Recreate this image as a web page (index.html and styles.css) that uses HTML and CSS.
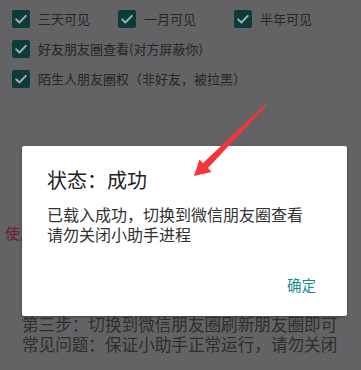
FILE: index.html
```html
<!DOCTYPE html>
<html lang="zh-CN">
<head>
<meta charset="utf-8">
<title>状态</title>
<link rel="stylesheet" href="styles.css">
</head>
<body>
<main class="page">
  <section class="options">
    <div class="row row-3">
      <label class="opt"><span class="box"><svg viewBox="0 0 18 18"><path d="M4.2 9.4l3.2 3.1 6.4-6.6" /></svg></span><span class="lbl">三天可见</span></label>
      <label class="opt"><span class="box"><svg viewBox="0 0 18 18"><path d="M4.2 9.4l3.2 3.1 6.4-6.6" /></svg></span><span class="lbl">一月可见</span></label>
      <label class="opt"><span class="box"><svg viewBox="0 0 18 18"><path d="M4.2 9.4l3.2 3.1 6.4-6.6" /></svg></span><span class="lbl">半年可见</span></label>
    </div>
    <div class="row">
      <label class="opt"><span class="box"><svg viewBox="0 0 18 18"><path d="M4.2 9.4l3.2 3.1 6.4-6.6" /></svg></span><span class="lbl">好友朋友圈查看(对方屏蔽你)</span></label>
    </div>
    <div class="row">
      <label class="opt"><span class="box"><svg viewBox="0 0 18 18"><path d="M4.2 9.4l3.2 3.1 6.4-6.6" /></svg></span><span class="lbl">陌生人朋友圈权（非好友，被拉黑）</span></label>
    </div>
  </section>

  <p class="notice">使用</p>

  <section class="steps">
    <p>第三步：切换到微信朋友圈刷新朋友圈即可</p>
    <p>常见问题：保证小助手正常运行，请勿关闭</p>
  </section>
</main>

<div class="dialog" role="dialog">
  <h2 class="dlg-title">状态：成功</h2>
  <p class="dlg-body">已载入成功，切换到微信朋友圈查看<br>请勿关闭小助手进程</p>
  <div class="dlg-actions"><button class="dlg-btn">确定</button></div>
</div>

<svg class="arrow" viewBox="0 0 82 82" width="82" height="82">
  <polygon points="6,76 11.5,59.5 15,63 77.3,4.2 78.5,5.5 20,68 23.5,72" />
</svg>
</body>
</html>
```

FILE: styles.css
```css
* { box-sizing: border-box; }

html, body {
  margin: 0;
  padding: 0;
}

body {
  width: 361px;
  height: 370px;
  overflow: hidden;
  background: #636264;
  font-family: "Noto Sans CJK SC", "Noto Sans", sans-serif;
  position: relative;
}

.page {
  display: flex;
  flex-direction: column;
}

.options {
  padding: 4px 12px 0;
  display: flex;
  flex-direction: column;
}

.row {
  height: 30px;
  display: flex;
  align-items: center;
}

.row-3 {
  display: grid;
  grid-template-columns: 106px 116px 1fr;
  align-items: center;
}

.opt {
  display: flex;
  align-items: center;
  gap: 8px;
}

.box {
  width: 18px;
  height: 18px;
  border-radius: 2px;
  background: #0c3b3c;
  display: flex;
}

.box svg {
  width: 18px;
  height: 18px;
}

.box path {
  fill: none;
  stroke: #a3abab;
  stroke-width: 2;
  stroke-linecap: round;
  stroke-linejoin: round;
}

.lbl {
  font-size: 13px;
  line-height: 18px;
  color: #262626;
  white-space: nowrap;
}

.notice {
  margin: 129px 0 0;
  padding-left: 5px;
  font-size: 15px;
  line-height: 20px;
  color: #6a1d2b;
  white-space: nowrap;
}

.steps {
  margin-top: 71px;
  padding-left: 22px;
}

.steps p {
  margin: 0;
  font-size: 16.6px;
  line-height: 20px;
  color: #2e2e2e;
  white-space: nowrap;
}

.dialog {
  position: absolute;
  left: 22px;
  top: 146px;
  width: 325px;
  height: 170px;
  background: #ffffff;
  border-radius: 2px;
  box-shadow: 0 1px 3px rgba(0, 0, 0, 0.35);
  padding: 22px 0 0 25px;
  display: flex;
  flex-direction: column;
}

.dlg-title {
  margin: 0;
  font-size: 20px;
  line-height: 24px;
  font-weight: 400;
  color: #222222;
}

.dlg-body {
  margin: 12px 0 0;
  font-size: 16px;
  line-height: 20px;
  color: #333333;
}

.dlg-actions {
  margin-top: 31px;
  display: flex;
  justify-content: flex-end;
  padding-right: 31px;
}

.dlg-btn {
  border: 0;
  background: none;
  padding: 0;
  font-family: inherit;
  font-size: 14.5px;
  line-height: 20px;
  color: #168b8d;
}

.arrow {
  position: absolute;
  left: 188px;
  top: 100px;
}

.arrow polygon {
  fill: #f4363b;
}
```
